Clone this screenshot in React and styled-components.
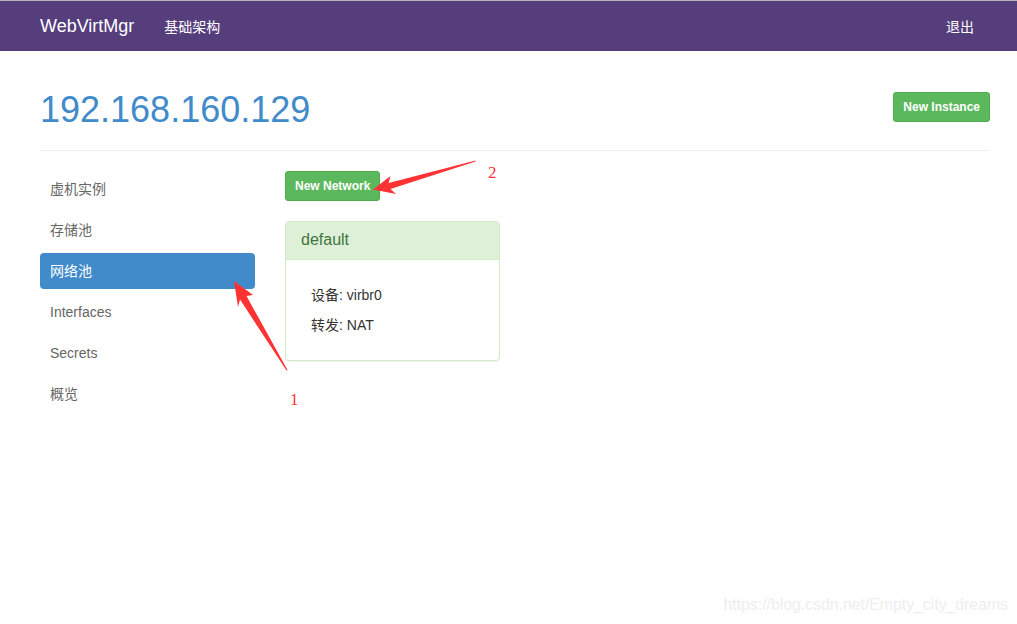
import React from 'react';
import styled, { createGlobalStyle } from 'styled-components';

const GlobalStyle = createGlobalStyle`
  html, body {
    margin: 0;
    padding: 0;
    background: #fff;
  }
  body {
    font-family: "Liberation Sans", Arial, "Noto Sans CJK SC", sans-serif;
    font-size: 14px;
    color: #333;
  }
`;

const Page = styled.div`
  position: relative;
  width: 1017px;
  height: 624px;
  overflow: hidden;
`;

const Navbar = styled.div`
  height: 50px;
  border-top: 1px solid #b4b4b4;
  background: #563d7c;
  display: flex;
  align-items: center;
  padding: 0 28px 0 40px;
`;

const Brand = styled.div`
  color: #fff;
  font-size: 18px;
  margin-right: 15px;
`;

const NavLink = styled.div`
  color: #fff;
  font-size: 14px;
  padding: 0 15px;
  margin-left: ${p => (p.$right ? 'auto' : '0')};
`;

const Container = styled.div`
  padding: 0 27px 0 40px;
`;

const Header = styled.div`
  display: flex;
  justify-content: space-between;
  align-items: flex-start;
  margin-top: 39px;
  padding-bottom: 20px;
  border-bottom: 1px solid #eee;
`;

const Title = styled.h1`
  margin: 0;
  font-size: 36px;
  font-weight: normal;
  line-height: 1.1;
  color: #428bca;
`;

const Button = styled.button`
  font-family: "Liberation Sans", Arial, sans-serif;
  font-size: 12px;
  font-weight: bold;
  color: #fff;
  background: #5cb85c;
  border: 1px solid #4cae4c;
  border-radius: 3px;
  height: 30px;
  padding: 0 9px;
  margin-top: ${p => p.$top || 0}px;
`;

const Main = styled.div`
  display: flex;
  gap: 30px;
  margin-top: 20px;
`;

const Sidebar = styled.div`
  width: 215px;
  display: flex;
  flex-direction: column;
  gap: 5px;
`;

const SideItem = styled.div`
  height: 36px;
  display: flex;
  align-items: center;
  padding-left: 10px;
  border-radius: 4px;
  font-size: 14px;
  line-height: 1;
  color: ${p => (p.$active ? '#fff' : '#666')};
  background: ${p => (p.$active ? '#428bca' : 'transparent')};
`;

const Content = styled.div`
  display: flex;
  flex-direction: column;
  align-items: flex-start;
`;

const Panel = styled.div`
  margin-top: 20px;
  width: 215px;
  border: 1px solid #d6e9c6;
  border-radius: 4px;
  box-sizing: border-box;
  box-shadow: 0 1px 1px rgba(0, 0, 0, 0.05);
`;

const PanelHeading = styled.div`
  height: 37px;
  display: flex;
  align-items: center;
  padding-left: 15px;
  background: #dff0d8;
  border-bottom: 1px solid #d6e9c6;
  color: #3c763d;
  font-size: 16px;
  border-radius: 3px 3px 0 0;
`;

const PanelBody = styled.div`
  padding: 20px 25px 20px 25px;
`;

const Line = styled.div`
  line-height: 30px;
  font-size: 14px;
  color: #333;
`;

const Overlay = styled.svg`
  position: absolute;
  left: 0;
  top: 0;
  pointer-events: none;
`;

const Watermark = styled.div`
  position: absolute;
  right: 9px;
  top: 596px;
  font-size: 15.8px;
  color: #eeeeee;
  font-family: "Liberation Sans", Arial, sans-serif;
`;

const items = ['虚机实例', '存储池', '网络池', 'Interfaces', 'Secrets', '概览'];

export default function App() {
  return (
    <Page>
      <GlobalStyle />
      <Navbar>
        <Brand>WebVirtMgr</Brand>
        <NavLink>基础架构</NavLink>
        <NavLink $right>退出</NavLink>
      </Navbar>
      <Container>
        <Header>
          <Title>192.168.160.129</Title>
          <Button $top={2}>New Instance</Button>
        </Header>
        <Main>
          <Sidebar>
            {items.map(t => (
              <SideItem key={t} $active={t === '网络池'}>{t}</SideItem>
            ))}
          </Sidebar>
          <Content>
            <Button>New Network</Button>
            <Panel>
              <PanelHeading>default</PanelHeading>
              <PanelBody>
                <Line>设备: virbr0</Line>
                <Line>转发: NAT</Line>
              </PanelBody>
            </Panel>
          </Content>
        </Main>
      </Container>
      <Overlay width="1017" height="624" viewBox="0 0 1017 624">
        <polygon
          points="234,281 253,295 246.5,296 287.5,370 286.5,370.5 240,299.5 238,307"
          fill="#ff3333"
        />
        <polygon
          points="373,189.5 390.5,176 388.6,183 475.5,160.5 475.5,161.5 390.5,189 396,194"
          fill="#ff3333"
        />
        <text x="290" y="405" fill="#ff3333" fontSize="17" fontFamily="Liberation Serif, serif">1</text>
        <text x="488" y="178" fill="#ff3333" fontSize="17" fontFamily="Liberation Serif, serif">2</text>
      </Overlay>
      <Watermark>https://blog.csdn.net/Empty_city_dreams</Watermark>
    </Page>
  );
}
